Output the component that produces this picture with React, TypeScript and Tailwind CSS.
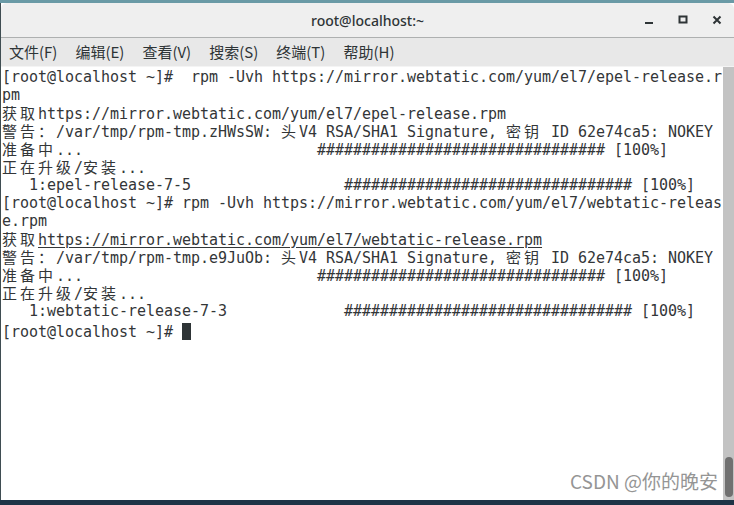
import React from "react";

const HASH = "#".repeat(32);
const pad = (n: number) => " ".repeat(n);

type Line = { text: string; link?: string; cursor?: boolean };

const lines: Line[] = [
  { text: "[root@localhost ~]#  rpm -Uvh https://mirror.webtatic.com/yum/el7/epel-release.r" },
  { text: "pm" },
  { text: "获取https://mirror.webtatic.com/yum/el7/epel-release.rpm" },
  { text: "警告：/var/tmp/rpm-tmp.zHWsSW: 头V4 RSA/SHA1 Signature, 密钥 ID 62e74ca5: NOKEY" },
  { text: "准备中..." + pad(26) + HASH + " [100%]" },
  { text: "正在升级/安装..." },
  { text: "   1:epel-release-7-5" + pad(17) + HASH + " [100%]" },
  { text: "[root@localhost ~]# rpm -Uvh https://mirror.webtatic.com/yum/el7/webtatic-releas" },
  { text: "e.rpm" },
  { text: "获取", link: "https://mirror.webtatic.com/yum/el7/webtatic-release.rpm" },
  { text: "警告：/var/tmp/rpm-tmp.e9JuOb: 头V4 RSA/SHA1 Signature, 密钥 ID 62e74ca5: NOKEY" },
  { text: "准备中..." + pad(26) + HASH + " [100%]" },
  { text: "正在升级/安装..." },
  { text: "   1:webtatic-release-7-3" + pad(13) + HASH + " [100%]" },
  { text: "[root@localhost ~]# ", cursor: true },
];

const isWide = (ch: string) => /[\u2e80-\u9fff\u3000-\u303f\uff00-\uffef]/.test(ch);

function TermText({ text }: { text: string }) {
  const parts: React.ReactNode[] = [];
  let buf = "";
  let k = 0;
  for (const ch of text) {
    if (isWide(ch)) {
      if (buf) {
        parts.push(<span key={k++}>{buf}</span>);
        buf = "";
      }
      parts.push(
        <span
          key={k++}
          className="inline-block w-[18px] font-['Noto_Sans_CJK_SC',sans-serif] text-[15px]"
        >
          {ch}
        </span>
      );
    } else {
      buf += ch;
    }
  }
  if (buf) parts.push(<span key={k++}>{buf}</span>);
  return <>{parts}</>;
}

const menus = ["文件(F)", "编辑(E)", "查看(V)", "搜索(S)", "终端(T)", "帮助(H)"];

export default function App() {
  return (
    <div className="flex h-[505px] w-[734px] flex-col overflow-hidden bg-[#1e3346]">

      {/* Window */}

      <div className="flex flex-1 flex-col bg-[#6a9aa6] pt-[3px]">
        <div className="flex flex-1 flex-col border-l border-[#3f4d52] bg-white">

          {/* Title bar */}

          <div className="relative flex h-[35px] items-center justify-center rounded-t-[6px] border-b border-[#aeb0b0] bg-[#efefef]">
            <span className="font-['Noto_Sans',sans-serif] text-[14px] font-medium text-[#2e3436]">
              root@localhost:~
            </span>
            <div className="absolute right-[12px] top-0 flex h-full items-center gap-[24px]">
              <svg width="10" height="10" viewBox="0 0 10 10">
                <rect x="1" y="7" width="8" height="2" fill="#2e3436" />
              </svg>
              <svg width="10" height="10" viewBox="0 0 10 10">
                <rect x="1.5" y="1.5" width="7" height="6" fill="none" stroke="#2e3436" strokeWidth="2" />
              </svg>
              <svg width="10" height="10" viewBox="0 0 10 10">
                <path d="M1.5 1.5 L8.5 8.5 M8.5 1.5 L1.5 8.5" stroke="#2e3436" strokeWidth="2" />
              </svg>
            </div>
          </div>

          {/* Menu bar */}

          <div className="flex h-[29px] items-center gap-[18px] border-b border-[#f4f4f4] bg-[#e8e8e8] pl-[8px] pt-[1px] font-['Noto_Sans_CJK_SC',sans-serif] text-[15px] text-[#2e3436]">
            {menus.map((m) => (
              <span key={m}>{m}</span>
            ))}
          </div>

          {/* Terminal */}

          <div className="relative flex flex-1">
            <div className="flex-1 pl-[1px] pt-[1px] font-['DejaVu_Sans_Mono',monospace] text-[15px] leading-[18px] tracking-[-0.03px] whitespace-pre text-[#333638]">
              {lines.map((l, i) => (
                <div key={i} className="h-[18px]">
                  <TermText text={l.text} />
                  {l.link && <span className="underline underline-offset-[2px]">{l.link}</span>}
                  {l.cursor && <span className="inline-block h-[17px] w-[9px] translate-y-[3px] bg-[#2e3436]" />}
                </div>
              ))}
            </div>

            {/* Scrollbar */}

            <div className="flex w-[11px] flex-col justify-end bg-[#c3c3c3] pb-[3px] pl-[2px] pr-[1px]">
              <div className="h-[40px] w-[8px] rounded-[4px] bg-[#707070]" />
            </div>

            <span className="absolute bottom-[5px] right-[16px] font-['Noto_Sans_CJK_SC',sans-serif] text-[19px] text-[#959595]">
              CSDN @你的晚安
            </span>
          </div>
        </div>
      </div>

      <div className="h-[5px] bg-[#1e3346]" />
    </div>
  );
}
